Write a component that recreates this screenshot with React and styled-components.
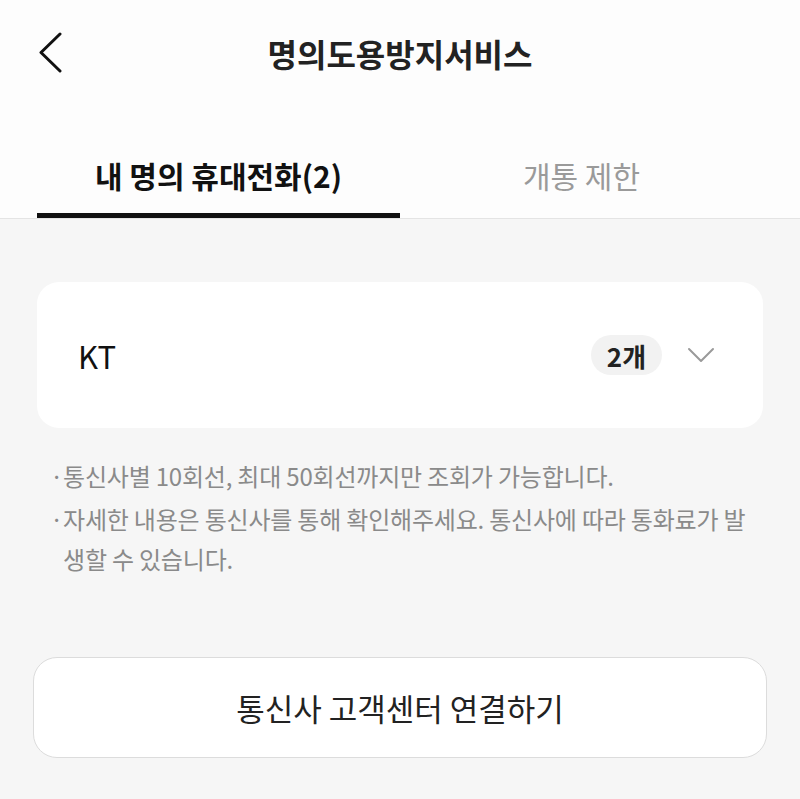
import styled, { createGlobalStyle } from 'styled-components';

const GlobalStyle = createGlobalStyle`
  * {
    box-sizing: border-box;
  }

  body {
    margin: 0;
    background-color: #f6f6f6;
    font-family: 'Noto Sans CJK KR', 'Noto Sans', sans-serif;
    color: #222;
  }
`;

const notes = [
  '통신사별 10회선, 최대 50회선까지만 조회가 가능합니다.',
  '자세한 내용은 통신사를 통해 확인해주세요. 통신사에 따라 통화료가 발생할 수 있습니다.',
];

const App = () => {
  return (
    <>
      <GlobalStyle />
      <Page>
        <TopArea>
          <Header>
            <BackButton aria-label="뒤로가기">
              <svg width="26" height="42" viewBox="0 0 26 42" fill="none">
                <path
                  d="M23 2 L4 20.5 L23 39"
                  stroke="#111"
                  strokeWidth="3"
                  strokeLinecap="round"
                  strokeLinejoin="round"
                />
              </svg>
            </BackButton>
            <Title>명의도용방지서비스</Title>
            <span />
          </Header>
          <TabBar>
            <Tab active>내 명의 휴대전화(2)</Tab>
            <Tab>개통 제한</Tab>
          </TabBar>
        </TopArea>

        <Content>
          <CarrierCard>
            <CarrierName>KT</CarrierName>
            <CountGroup>
              <CountBadge>2개</CountBadge>
              <svg width="28" height="16" viewBox="0 0 28 16" fill="none">
                <path
                  d="M2 2 L14 14 L26 2"
                  stroke="#9a9a9a"
                  strokeWidth="2"
                  strokeLinecap="round"
                  strokeLinejoin="round"
                />
              </svg>
            </CountGroup>
          </CarrierCard>

          <NoteList>
            {notes.map(text => (
              <NoteItem key={text}>{text}</NoteItem>
            ))}
          </NoteList>

          <ConnectButton>통신사 고객센터 연결하기</ConnectButton>
        </Content>
      </Page>
    </>
  );
};

const Page = styled.div`
  width: 800px;
  min-height: 799px;
`;

const TopArea = styled.div`
  background-color: #fdfdfd;
  border-bottom: 1px solid #e4e4e4;
`;

const Header = styled.header`
  display: grid;
  grid-template-columns: 1fr auto 1fr;
  align-items: center;
  height: 108px;
  padding: 0 37px 2px;
`;

const BackButton = styled.button`
  display: flex;
  align-items: center;
  justify-self: start;
  padding: 0;
  border: none;
  background: none;
  cursor: pointer;
`;

const Title = styled.h1`
  margin: 0;
  font-size: 32px;
  font-weight: 700;
  color: #222;
`;

const TabBar = styled.nav`
  display: grid;
  grid-template-columns: 1fr 1fr;
  padding: 40px 37px 0;
`;

const Tab = styled.div`
  display: flex;
  justify-content: center;
  align-items: center;
  height: 70px;
  padding-bottom: 12px;
  font-size: 30px;
  font-weight: ${({ active }) => (active ? 700 : 400)};
  color: ${({ active }) => (active ? '#111' : '#9a9a9a')};
  border-bottom: 5px solid ${({ active }) => (active ? '#111' : 'transparent')};
  cursor: pointer;
`;

const Content = styled.main`
  padding: 63px 37px 40px;
`;

const CarrierCard = styled.section`
  display: flex;
  justify-content: space-between;
  align-items: center;
  height: 146px;
  padding: 0 48px 0 41px;
  border-radius: 22px;
  background-color: #fff;
`;

const CarrierName = styled.span`
  font-size: 31px;
  color: #111;
`;

const CountGroup = styled.div`
  display: flex;
  align-items: center;
  gap: 25px;
`;

const CountBadge = styled.span`
  display: flex;
  align-items: center;
  justify-content: center;
  width: 71px;
  height: 40px;
  border-radius: 20px;
  background-color: #f2f2f2;
  font-size: 26px;
  font-weight: 700;
  color: #222;
`;

const NoteList = styled.ul`
  display: flex;
  flex-direction: column;
  gap: 3px;
  margin: 28px 0 0;
  padding: 0 0 0 13px;
  list-style: none;
`;

const NoteItem = styled.li`
  position: relative;
  padding-left: 13px;
  font-size: 24px;
  line-height: 40px;
  letter-spacing: -0.2px;
  color: #8a8a8a;

  &::before {
    content: '·';
    position: absolute;
    left: 0;
  }
`;

const ConnectButton = styled.button`
  display: block;
  width: calc(100% + 8px);
  height: 101px;
  margin: 78px -4px 0;
  border: 1px solid #dcdcdc;
  border-radius: 24px;
  background-color: #fff;
  font-family: inherit;
  font-size: 31px;
  color: #222;
  cursor: pointer;
`;

export default App;
